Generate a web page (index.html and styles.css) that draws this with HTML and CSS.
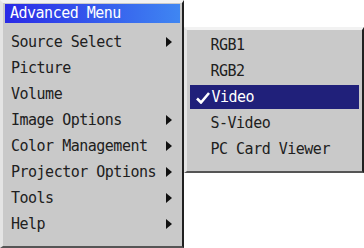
FILE: index.html
```html
<!DOCTYPE html>
<html lang="en">
<head>
    <meta charset="UTF-8">
    <title>Advanced Menu</title>
    <link rel="stylesheet" href="styles.css">
</head>
<body>
    <div class="screen">
        <div class="menu main-menu">
            <div class="title">Advanced Menu</div>
            <div class="item">Source Select <span class="arrow"></span></div>
            <div class="item">Picture</div>
            <div class="item">Volume</div>
            <div class="item">Image Options <span class="arrow"></span></div>
            <div class="item">Color Management <span class="arrow"></span></div>
            <div class="item">Projector Options<span class="arrow"></span></div>
            <div class="item">Tools <span class="arrow"></span></div>
            <div class="item">Help <span class="arrow"></span></div>
        </div>
        <div class="menu sub-menu">
            <div class="sub-item">RGB1</div>
            <div class="sub-item">RGB2</div>
            <div class="sub-item selected">
                <svg class="check" width="14" height="12" viewBox="0 0 14 12"><path d="M1 6.5 L5 10.5 L13 1" fill="none" stroke="#ffffff" stroke-width="2.6"/></svg>Video
            </div>
            <div class="sub-item">S-Video</div>
            <div class="sub-item">PC Card Viewer</div>
        </div>
    </div>
</body>
</html>
```

FILE: styles.css
```css
body {
    margin: 0;
    background: #ffffff;
    font-family: "DejaVu Sans Mono", monospace;
}
.screen {
    display: flex;
    align-items: flex-start;
}
.menu {
    background: #c9c9c9;
    box-sizing: border-box;
    border-top: 3px solid #f2f2f2;
    border-left: 3px solid #e4e4e4;
    border-right: 2px solid #202020;
    border-bottom: 2px solid #555555;
    color: #202020;
    font-size: 15px;
    letter-spacing: -0.5px;
}
.main-menu {
    width: 184px;
    height: 248px;
    padding: 1px 2px 0 2px;
}
.title {
    height: 19px;
    line-height: 19px;
    padding-left: 5px;
    margin-bottom: 6px;
    color: #ffffff;
    background: linear-gradient(to right, #2a2ae6, #3f86f2);
}
.item {
    height: 26px;
    line-height: 26px;
    display: flex;
    align-items: center;
    padding-left: 6px;
    white-space: pre;
}
.arrow {
    margin-left: auto;
    margin-right: 8px;
    width: 0;
    height: 0;
    border-top: 5px solid transparent;
    border-bottom: 5px solid transparent;
    border-left: 6px solid #101010;
}
.sub-menu {
    width: 181px;
    margin-top: 27px;
    padding: 2px 3px 9px 3px;
}
.sub-item {
    height: 26px;
    line-height: 26px;
    padding-left: 21px;
    position: relative;
}
.sub-item.selected {
    background: #20207a;
    color: #ffffff;
    height: 24px;
    line-height: 24px;
    margin: 1px 0;
    padding-left: 22px;
}
.check {
    position: absolute;
    left: 6px;
    top: 7px;
}
```
